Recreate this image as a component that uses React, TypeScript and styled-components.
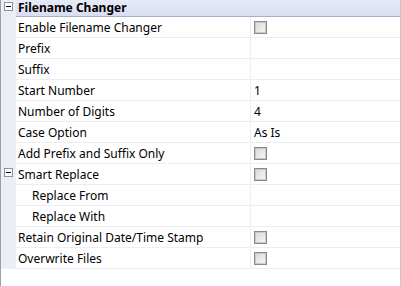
import styled, { createGlobalStyle } from "styled-components";

const GlobalStyle = createGlobalStyle`
  html, body {
    margin: 0;
    padding: 0;
    background: #ffffff;
  }
  body {
    font-family: "Noto Sans", "Open Sans", sans-serif;
    font-size: 12px;
    color: #000;
  }
`;

type Prop = {
  label: string;
  value?: string;
  checkbox?: boolean;
  indent?: boolean;
  expander?: boolean;
};

const props: Prop[] = [
  { label: "Enable Filename Changer", checkbox: true },
  { label: "Prefix" },
  { label: "Suffix" },
  { label: "Start Number", value: "1" },
  { label: "Number of Digits", value: "4" },
  { label: "Case Option", value: "As Is" },
  { label: "Add Prefix and Suffix Only", checkbox: true },
  { label: "Smart Replace", checkbox: true, expander: true },
  { label: "Replace From", indent: true },
  { label: "Replace With", indent: true },
  { label: "Retain Original Date/Time Stamp", checkbox: true },
  { label: "Overwrite Files", checkbox: true },
];

const Frame = styled.div`
  width: 401px;
  height: 286px;
  box-sizing: border-box;
  border-left: 1px solid #a0a0a0;
  border-right: 1px solid #c8c8c8;
  background: #fff;
  overflow: hidden;
`;

const Grid = styled.div`
  display: flex;
  flex-direction: column;
`;

const Row = styled.div`
  display: grid;
  grid-template-columns: 15px 235px 1fr;
  height: 21px;
`;

const HeaderRow = styled(Row)`
  height: 17px;
`;

const Gutter = styled.div<{ $top?: number }>`
  background: #eceef5;
  display: flex;
  align-items: flex-start;
  justify-content: center;
  padding-top: ${(p) => p.$top ?? 4}px;
  box-sizing: border-box;
`;

const HeaderCell = styled.div`
  grid-column: 2 / 4;
  background: linear-gradient(#e7eaf7, #d8ddf1);
  border-bottom: 1px solid #a6aec8;
  font-weight: bold;
  padding-left: 2px;
  line-height: 15px;
  white-space: nowrap;
`;

const Label = styled.div<{ $indent?: boolean }>`
  border-bottom: 1px solid #eceef6;
  border-right: 1px solid #eceef6;
  padding-left: ${(p) => (p.$indent ? 16 : 2)}px;
  padding-top: 2px;
  line-height: 18px;
  white-space: nowrap;
  overflow: hidden;
`;

const Value = styled.div`
  border-bottom: 1px solid #eceef6;
  padding-left: 3px;
  padding-top: 2px;
  line-height: 18px;
  display: flex;
  align-items: center;
  white-space: nowrap;
`;

const Checkbox = styled.span`
  width: 13px;
  height: 13px;
  margin-top: 2px;
  box-sizing: border-box;
  border: 1px solid #8a8a8a;
  box-shadow: inset 0 0 0 1px #c8c8c8;
  background: linear-gradient(135deg, #d8d8d8, #f8f8f8);
  align-self: flex-start;
`;

const Expander = styled.span`
  width: 9px;
  height: 9px;
  box-sizing: border-box;
  border: 1px solid #8c93a6;
  background: #fff;
  position: relative;

  &::after {
    content: "";
    position: absolute;
    left: 1px;
    right: 1px;
    top: 3px;
    height: 1px;
    background: #000;
  }
`;

export default function App() {
  return (
    <>
      <GlobalStyle />
      <Frame>
        <Grid>
          <HeaderRow>
            <Gutter $top={2}>
              <Expander />
            </Gutter>
            <HeaderCell>Filename Changer</HeaderCell>
          </HeaderRow>
          {props.map((p) => (
            <Row key={p.label}>
              <Gutter>{p.expander && <Expander />}</Gutter>
              <Label $indent={p.indent}>{p.label}</Label>
              <Value>{p.checkbox ? <Checkbox /> : p.value}</Value>
            </Row>
          ))}
        </Grid>
      </Frame>
    </>
  );
}
